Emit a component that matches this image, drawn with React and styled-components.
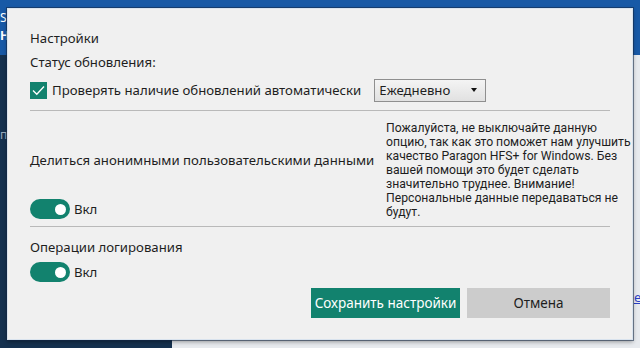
import React from "react";
import styled, { createGlobalStyle } from "styled-components";

const Global = createGlobalStyle`
  html, body { margin: 0; padding: 0; overflow: hidden; }
  body { font-family: "Noto Sans", "Open Sans", sans-serif; }
`;

const Desktop = styled.div`
  position: relative;
  width: 640px;
  height: 348px;
  display: grid;
  grid-template-rows: 55px 1fr;
  overflow: hidden;
`;

const TopBand = styled.div`
  background: #1859a6;
  padding: 9px 0 0 0;
`;

const EdgeText = styled.div`
  width: 7px;
  overflow: hidden;
  white-space: nowrap;
  color: ${(p) => p.$color || "#ffffff"};
  font-size: 12px;
  font-weight: ${(p) => p.$weight || 400};
  line-height: 18px;
`;

const LowerArea = styled.div`
  display: grid;
  grid-template-columns: 172px 1fr;
`;

const NavyPane = styled.div`
  background: #15314f;
  padding-top: 71px;
`;

const LightPane = styled.div`
  background: #e7eaee;
  display: flex;
  justify-content: flex-end;
  padding-top: 234px;
`;

const EdgeLink = styled.span`
  width: 6px;
  overflow: hidden;
  color: #2a3fc4;
  text-decoration: underline;
  font-size: 13px;
  line-height: 16px;
  white-space: nowrap;
`;

const Dialog = styled.div`
  position: absolute;
  left: 7px;
  top: 8px;
  width: 626px;
  height: 332px;
  box-sizing: border-box;
  background: #f0f0f0;
  border: 1px solid #d9e3ee;
  box-shadow: 0 0 0 1px rgba(20, 40, 70, 0.55), 0 2px 4px rgba(0, 0, 0, 0.35);
  padding: 19px 22px 0 22px;
  display: flex;
  flex-direction: column;
  color: #1e1e1e;
  font-size: 13.2px;
`;

const Label = styled.div`
  line-height: 20px;
  height: 20px;
  margin-top: ${(p) => p.$mt || 0}px;
  white-space: nowrap;
`;

const CheckRow = styled.div`
  display: flex;
  align-items: center;
  height: 24px;
  margin-top: 6px;
`;

const CheckBox = styled.span`
  width: 17px;
  height: 17px;
  background: #12826e;
  display: inline-flex;
  align-items: center;
  justify-content: center;
  margin-right: 5px;
`;

const CheckText = styled.span`
  line-height: 20px;
  white-space: nowrap;
`;

const Select = styled.div`
  margin-left: 13px;
  width: 112px;
  height: 23px;
  box-sizing: border-box;
  border: 1px solid #8f8f8f;
  background: linear-gradient(#f4f4f4, #e1e1e1);
  display: flex;
  align-items: center;
  justify-content: space-between;
  padding: 0 8px 0 4px;
  line-height: 20px;
`;

const Caret = styled.span`
  width: 0;
  height: 0;
  border-left: 3.5px solid transparent;
  border-right: 3.5px solid transparent;
  border-top: 4px solid #111;
`;

const Divider = styled.div`
  height: 1px;
  background: #b9b9b9;
  margin-top: ${(p) => p.$mt || 0}px;
`;

const ShareSection = styled.div`
  display: grid;
  grid-template-columns: 1fr 224px;
  column-gap: 8px;
  margin-top: 10px;
`;

const ShareLeft = styled.div`
  display: flex;
  flex-direction: column;
  justify-content: flex-end;
`;

const ShareLabel = styled.div`
  line-height: 20px;
  white-space: nowrap;
  margin-bottom: 29px;
`;

const Note = styled.div`
  font-family: Roboto, "Noto Sans", sans-serif;
  font-size: 12.2px;
  line-height: 14px;
  color: #1e1e1e;
`;

const NoteLine = styled.span`
  display: block;
  white-space: nowrap;
`;

const ToggleRow = styled.div`
  display: flex;
  align-items: center;
  height: 20px;
  margin-top: ${(p) => p.$mt || 0}px;
`;

const Toggle = styled.span`
  width: 40px;
  height: 20px;
  border-radius: 10px;
  background: #12826e;
  display: inline-flex;
  align-items: center;
  justify-content: flex-end;
  padding-right: 4px;
  box-sizing: border-box;
  margin-right: 4px;
`;

const Knob = styled.span`
  width: 11px;
  height: 11px;
  border-radius: 50%;
  background: #ffffff;
`;

const ToggleText = styled.span`
  line-height: 20px;
`;

const Buttons = styled.div`
  display: flex;
  justify-content: flex-end;
  gap: 7px;
  margin-top: 6px;
`;

const Button = styled.button`
  height: 30px;
  width: ${(p) => p.$w}px;
  border: none;
  margin: 0;
  padding: 0;
  font-family: inherit;
  font-size: 13.5px;
  background: ${(p) => (p.$primary ? "#12826e" : "#cccccc")};
  color: ${(p) => (p.$primary ? "#ffffff" : "#1e1e1e")};
`;

export default function App() {
  return (
    <>
      <Global />
      <Desktop>
        <TopBand>
          <EdgeText>Se</EdgeText>
          <EdgeText $weight={700}>Н</EdgeText>
        </TopBand>
        <LowerArea>
          <NavyPane>
            <EdgeText $color="#9aa9bb">п</EdgeText>
          </NavyPane>
          <LightPane>
            <EdgeLink>e</EdgeLink>
          </LightPane>
        </LowerArea>
        <Dialog>
          <Label>Настройки</Label>
          <Label $mt={4}>Статус обновления:</Label>
          <CheckRow>
            <CheckBox>
              <svg width="13" height="11" viewBox="0 0 13 11">
                <path d="M1 5.5 L4.8 9.3 L12 1.5" fill="none" stroke="#fff" strokeWidth="1.3" />
              </svg>
            </CheckBox>
            <CheckText>Проверять наличие обновлений автоматически</CheckText>
            <Select>
              <span>Ежедневно</span>
              <Caret />
            </Select>
          </CheckRow>
          <Divider $mt={8} />
          <ShareSection>
            <ShareLeft>
              <ShareLabel>Делиться анонимными пользовательскими данными</ShareLabel>
              <ToggleRow>
                <Toggle>
                  <Knob />
                </Toggle>
                <ToggleText>Вкл</ToggleText>
              </ToggleRow>
            </ShareLeft>
            <Note>
              <NoteLine>Пожалуйста, не выключайте данную</NoteLine>
              <NoteLine>опцию, так как это поможет нам улучшить</NoteLine>
              <NoteLine>качество Paragon HFS+ for Windows. Без</NoteLine>
              <NoteLine>вашей помощи это будет сделать</NoteLine>
              <NoteLine>значительно труднее. Внимание!</NoteLine>
              <NoteLine>Персональные данные передаваться не</NoteLine>
              <NoteLine>будут.</NoteLine>
            </Note>
          </ShareSection>
          <Divider $mt={7} />
          <Label $mt={10}>Операции логирования</Label>
          <ToggleRow $mt={5}>
            <Toggle>
              <Knob />
            </Toggle>
            <ToggleText>Вкл</ToggleText>
          </ToggleRow>
          <Buttons>
            <Button $primary $w={149}>Сохранить настройки</Button>
            <Button $w={143}>Отмена</Button>
          </Buttons>
        </Dialog>
      </Desktop>
    </>
  );
}
